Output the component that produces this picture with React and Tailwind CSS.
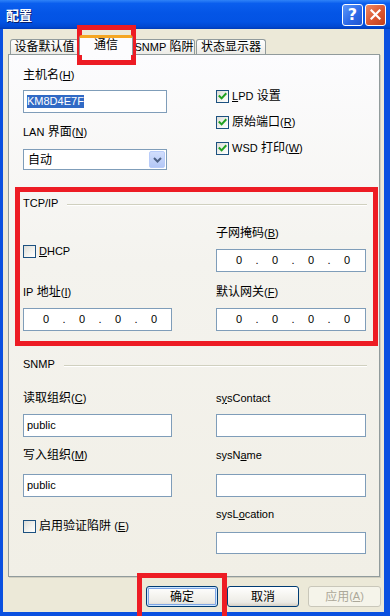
import React, { Fragment } from "react";

const L = ({ children }) => <span className="text-[11px]">{children}</span>;
const U = ({ children }) => <span className="underline underline-offset-[1px]">{children}</span>;

const Label = ({ children, mt }) => (
  <div className={`h-[14px] leading-[14px] whitespace-nowrap ${mt}`}>{children}</div>
);

const Box = ({ checked }) => (
  <div className="w-[13px] h-[13px] shrink-0 border border-[#1C5180] bg-[linear-gradient(135deg,#DCDCD7_0%,#F4F4F0_60%,#FFFFFF_100%)] flex items-center justify-center">
    {checked && (
      <svg width="9" height="9" viewBox="0 0 9 9">
        <path d="M1.5 4.2 L3.6 6.4 L7.6 2" fill="none" stroke="#21A121" strokeWidth="2" strokeLinecap="square" />
      </svg>
    )}
  </div>
);

const Check = ({ checked, children, mt }) => (
  <div className={`flex items-center h-[13px] gap-[3px] whitespace-nowrap ${mt}`}>
    <Box checked={checked} />
    <span className="leading-[13px]">{children}</span>
  </div>
);

const Input = ({ children, cls }) => (
  <div className={`border border-[#7F9DB9] bg-white flex items-center pl-[3px] text-[11px] ${cls}`}>
    {children}
  </div>
);

const IP = ({ cls }) => (
  <div className={`h-[23px] border border-[#7F9DB9] bg-white flex items-center pl-[8px] text-[11px] ${cls}`}>
    {[0, 1, 2, 3].map((i) => (
      <Fragment key={i}>
        <span className="w-[28px] text-center">0</span>
        {i < 3 && <span className="w-[8px] text-center">.</span>}
      </Fragment>
    ))}
  </div>
);

const Group = ({ title, mt }) => (
  <div className={`flex items-center h-[14px] pr-[12px] pl-[14px] ${mt}`}>
    <span className="text-[11px] leading-[14px] whitespace-nowrap">{title}</span>
    <div className="flex-1 ml-[9px] mt-[3px] border-t border-[#D0D0BF] border-b border-b-white" />
  </div>
);

const Tab = ({ children, cls }) => (
  <div
    className={`h-[15px] border border-b-0 border-[#919B9C] rounded-t-[3px] bg-[linear-gradient(#FFFFFF,#ECEBE6)] flex justify-center pt-[0px] leading-[14px] whitespace-nowrap ${cls}`}
  >
    {children}
  </div>
);

const Btn = ({ children, variant }) => {
  if (variant === "disabled")
    return (
      <div className="w-[73px] h-[21px] rounded-[3px] border border-[#C9C7BA] bg-[#F5F4EA] flex items-center justify-center text-[#ACA899] whitespace-nowrap">
        {children}
      </div>
    );
  return (
    <div
      className={`w-[72px] h-[21px] rounded-[3px] border border-[#003C74] bg-[linear-gradient(#FFFFFF_0%,#F4F3EE_50%,#ECEBE6_80%,#D6D0C5_100%)] flex items-center justify-center whitespace-nowrap ${
        variant === "default" ? "shadow-[inset_0_0_0_1px_#CEE7FF,inset_0_0_0_2px_#7FA6E5]" : ""
      }`}
    >
      {children}
    </div>
  );
};

export default function App() {
  return (
    <div className="w-[390px] h-[616px] relative overflow-hidden flex flex-col bg-[#0A50E0] font-['Liberation_Sans','Noto_Sans_CJK_SC',sans-serif] text-[12px] text-black">
      {/* title bar */}
      <div className="h-[29px] shrink-0 flex items-center bg-[linear-gradient(#2F83F8_0%,#0A5EEE_12%,#0455E6_45%,#0353E4_75%,#0148D2_92%,#003BB8_100%)]">
        <span className="ml-[6px] text-white font-bold text-[13px] font-['Noto_Sans_CJK_SC',sans-serif] [text-shadow:1px_1px_0_#0A1E6A]">
          配置
        </span>
        <div className="ml-auto mr-[4px] flex gap-[2px]">
          <div className="w-[21px] h-[22px] rounded-[3px] border border-white bg-[linear-gradient(135deg,#5C98FA,#2A67E6_60%,#1F55D0)] flex items-center justify-center text-white font-bold text-[16px] leading-none font-['DejaVu_Sans',sans-serif]">
            ?
          </div>
          <div className="w-[21px] h-[22px] rounded-[3px] border border-white bg-[linear-gradient(135deg,#EE8A64,#DA5630_55%,#C2401C)] flex items-center justify-center">
            <svg width="11" height="11" viewBox="0 0 11 11">
              <path d="M1.5 1.5 L9.5 9.5 M9.5 1.5 L1.5 9.5" stroke="white" strokeWidth="2.2" strokeLinecap="square" />
            </svg>
          </div>
        </div>
      </div>

      {/* body */}
      <div className="ml-[3px] mr-[6px] mb-[4px] h-[583px] bg-[#ECE9D8] flex flex-col">
        {/* tabs */}
        <div className="mt-[6px] h-[19px] flex items-end pl-[7px]">
          <Tab cls="w-[69px]">设备默认值</Tab>
          <div className="relative z-10 -mb-px w-[54px] h-[20px] border-x border-[#919B9C] rounded-t-[3px] border-t-[3px] border-t-[#F5A623] bg-[#FCFCFE] flex justify-center pt-[1px] leading-[12px]">
            通信
          </div>
          <Tab cls="w-[62px]">
            <L>SNMP</L>&nbsp;陷阱
          </Tab>
          <Tab cls="w-[70px] ml-[1px]">状态显示器</Tab>
        </div>

        {/* panel */}
        <div className="ml-[5px] mr-[4px] h-[523px] border border-[#919B9C] bg-[linear-gradient(#FCFCFE,#F4F3EE_40%,#F1EFE6)] shadow-[1px_1px_0_#D0CEBF] flex flex-col">
          {/* top section */}
          <div className="grid grid-cols-[149px_150px] gap-x-[44px] pl-[14px]">
            <div className="flex flex-col">
              <Label mt="mt-[13px]">
                主机名<L>(<U>H</U>)</L>
              </Label>
              <Input cls="mt-[8px] w-[144px] h-[23px]">
                <span className="bg-[#316AC5] text-white leading-[13px] h-[13px]">KM8D4E7F</span>
              </Input>
              <Label mt="mt-[12px]">
                <L>LAN</L> 界面<L>(<U>N</U>)</L>
              </Label>
              <div className="mt-[10px] w-[144px] h-[21px] border border-[#7F9DB9] bg-white flex items-center pl-[4px]">
                <span>自动</span>
                <div className="ml-auto mr-[1px] w-[16px] h-[17px] rounded-[2px] border border-[#B9CCF9] bg-[linear-gradient(#D2DEFC,#B3C7F6)] flex items-center justify-center">
                  <svg width="9" height="6" viewBox="0 0 9 6">
                    <path d="M1 1 L4.5 4.5 L8 1" fill="none" stroke="#4D6185" strokeWidth="2" />
                  </svg>
                </div>
              </div>
            </div>
            <div className="flex flex-col pt-[35px]">
              <Check checked>
                <L>
                  <U>L</U>PD
                </L>{" "}
                设置
              </Check>
              <Check checked mt="mt-[13px]">
                原始端口<L>(<U>R</U>)</L>
              </Check>
              <Check checked mt="mt-[13px]">
                <L>WSD</L> 打印<L>(<U>W</U>)</L>
              </Check>
            </div>
          </div>

          {/* TCP/IP */}
          <Group title="TCP/IP" mt="mt-[26px]" />
          <div className="grid grid-cols-[149px_150px] gap-x-[44px] pl-[14px]">
            <div className="flex flex-col">
              <Check mt="mt-[35px]">
                <L>
                  <U>D</U>HCP
                </L>
              </Check>
              <Label mt="mt-[27px]">
                <L>IP</L> 地址<L>(<U>I</U>)</L>
              </Label>
              <IP cls="mt-[9px]" />
            </div>
            <div className="flex flex-col">
              <Label mt="mt-[16px]">
                子网掩码<L>(<U>B</U>)</L>
              </Label>
              <IP cls="mt-[9px]" />
              <Label mt="mt-[13px]">
                默认网关<L>(<U>F</U>)</L>
              </Label>
              <IP cls="mt-[9px]" />
            </div>
          </div>

          {/* SNMP */}
          <Group title="SNMP" mt="mt-[26px]" />
          <div className="grid grid-cols-[149px_150px] gap-x-[44px] pl-[14px]">
            <div className="flex flex-col">
              <Label mt="mt-[20px]">
                读取组织<L>(<U>C</U>)</L>
              </Label>
              <Input cls="mt-[9px] h-[23px]">public</Input>
              <Label mt="mt-[11px]">
                写入组织<L>(<U>M</U>)</L>
              </Label>
              <Input cls="mt-[12px] h-[23px]">public</Input>
              <Check mt="mt-[23px]">
                启用验证陷阱 <L>(<U>E</U>)</L>
              </Check>
            </div>
            <div className="flex flex-col">
              <Label mt="mt-[20px]">
                <L>
                  s<U>y</U>sContact
                </L>
              </Label>
              <Input cls="mt-[9px] h-[23px]" />
              <Label mt="mt-[11px]">
                <L>
                  sysN<U>a</U>me
                </L>
              </Label>
              <Input cls="mt-[12px] h-[23px]" />
              <Label mt="mt-[10px]">
                <L>
                  sysL<U>o</U>cation
                </L>
              </Label>
              <Input cls="mt-[11px] h-[22px]" />
            </div>
          </div>
        </div>

        {/* buttons */}
        <div className="mt-[9px] flex justify-end gap-[9px] pr-[3px]">
          <Btn variant="default">确定</Btn>
          <Btn>取消</Btn>
          <Btn variant="disabled">
            应用 <L>(<U>A</U>)</L>
          </Btn>
        </div>
      </div>

      {/* red annotation boxes */}
      <div className="absolute left-[77px] top-[25px] w-[59px] h-[40px] border-[5px] border-[#ED1C24] pointer-events-none" />
      <div className="absolute left-[15px] top-[187px] w-[363px] h-[159px] border-[5px] border-[#ED1C24] pointer-events-none" />
      <div className="absolute left-[137px] top-[573px] w-[90px] h-[50px] border-[5px] border-[#ED1C24] pointer-events-none" />
    </div>
  );
}
